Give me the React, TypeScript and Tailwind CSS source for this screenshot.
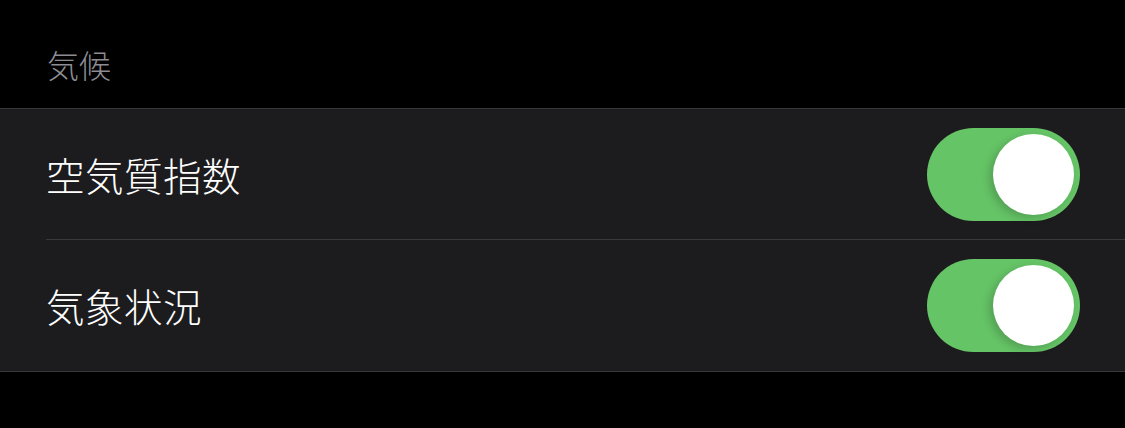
import React from "react";

const font = { fontFamily: '"Noto Sans CJK JP", "Noto Sans", sans-serif' };

function Toggle() {
  return (
    <div className="w-[153px] h-[93px] rounded-full bg-[#65c466] flex items-center justify-end pr-[6px]">
      <div className="w-[81px] h-[81px] rounded-full bg-white shadow-[-4px_3px_8px_rgba(0,0,0,0.18)]" />
    </div>
  );
}

function Row({ label, last }: { label: string; last?: boolean }) {
  return (
    <div className="pl-[46px]">
      <div className={`flex items-center justify-between pr-[45px] h-[131px] ${last ? "" : "border-b border-[#3a3a3c]"}`}>
        <span className="text-[38.5px] font-light text-white leading-none tracking-[0.5px]">{label}</span>
        <Toggle />
      </div>
    </div>
  );
}

export default function App() {
  return (
    <div className="w-[1125px] h-[428px] bg-black overflow-hidden" style={font}>
      <div className="h-[108px] pl-[47px] pt-[48px]">
        <span className="text-[32px] font-light leading-none text-[#8d8d93]">気候</span>
      </div>
      <div className="bg-[#1c1c1e] border-t border-b border-[#38383a]">
        <Row label="空気質指数" />
        <Row label="気象状況" last />
      </div>
    </div>
  );
}
